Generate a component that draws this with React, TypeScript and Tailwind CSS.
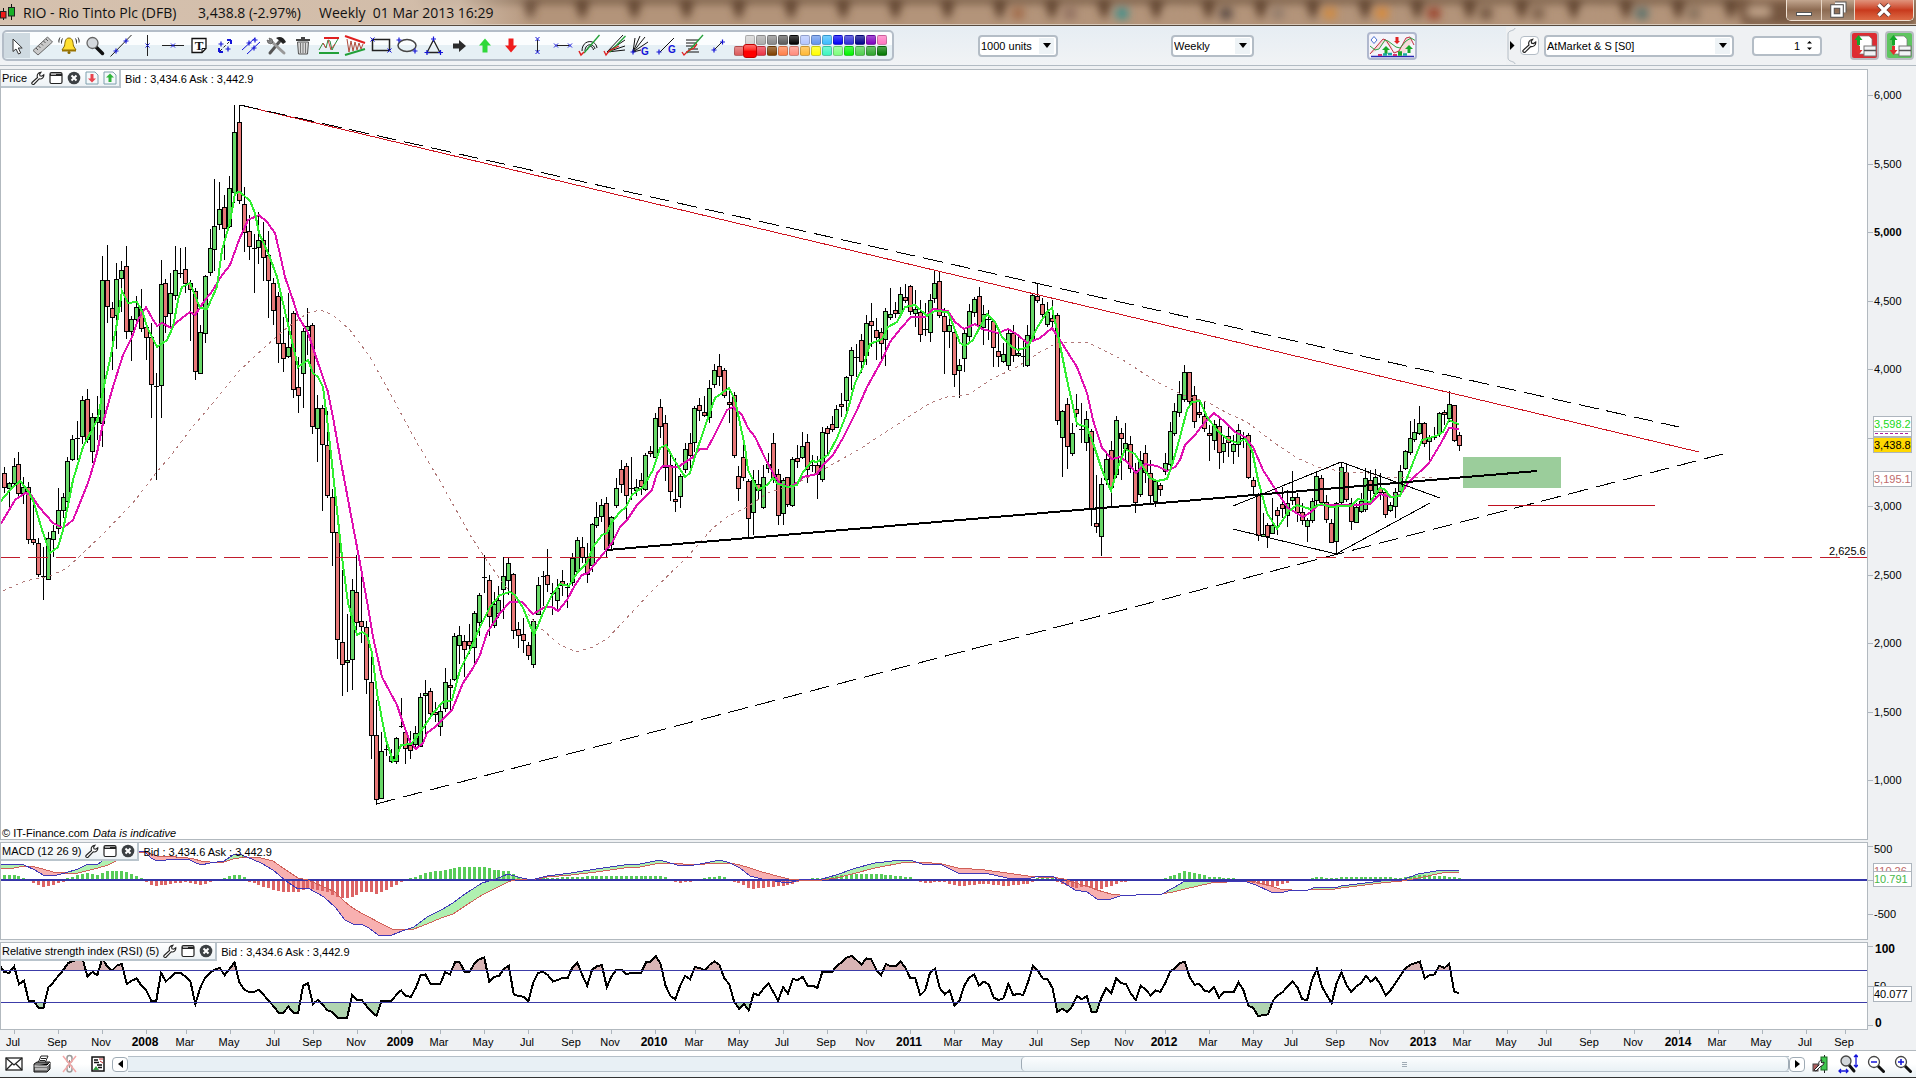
import type { ReactNode } from "react";

type Pt = [number, number];

// --- Chart data -----------------------------------------------------------

const FIRST_X = 4.3;
const WEEK = 4.898;

const weekX = (i: number) => Math.floor(FIRST_X + WEEK * i);

// One weekly candle per entry: direction, high, body top, body bottom, low
const CANDLES = `
r467,473,487,493 g482,483,488,507 g458,466,483,487 r452,464,493,498 g477,487,493,504 r482,487,539,544 r500,539,542,545 r538,543,574,577
r547,576,576,600 g532,538,579,580 g525,531,539,557 g488,510,528,534 g493,497,510,518 g457,461,501,502 g435,439,459,461 r421,438,438,460
g396,400,436,444 r389,399,439,443 g413,417,451,463 g396,417,422,440 g256,280,423,447 r245,280,306,323 r302,308,317,370 g263,279,315,349
g261,270,278,312 r246,266,331,339 g316,319,331,361 g296,307,319,326 r289,309,328,332 r322,327,337,360 r323,337,384,418 r373,386,386,480
g260,284,385,418 r279,283,316,333 g273,293,313,328 g246,270,295,300 r248,273,273,278 r247,269,283,293 r280,283,289,341 r288,291,371,380
g325,332,373,373 g275,276,333,343 g229,248,272,276 g179,226,249,271 g182,209,224,230 r195,207,228,260 g176,188,226,228 g105,132,192,203
r105,122,200,204 r187,204,232,252 r215,231,246,260 r234,248,248,293 g212,240,247,264 r222,240,257,281 r231,255,280,318 r278,283,310,325
r292,296,343,363 r317,343,358,372 g293,347,356,358 r311,313,389,398 r357,387,395,413 g328,331,373,408 g308,326,330,355 r323,325,426,434
g395,408,428,462 r405,408,444,511 r411,445,495,498 r489,497,532,566 r532,532,639,659 r570,642,664,696 g614,660,662,692 g579,590,659,690
r555,592,622,636 r577,621,626,643 r621,627,679,694 r655,682,735,759 r700,735,799,805 g732,751,798,799 r737,749,749,756 g749,756,761,763
g737,738,761,764 r698,726,726,728 r730,732,748,764 r731,745,750,759 g726,733,744,747 g693,697,746,747 g680,693,695,734 r688,691,713,715
r702,712,714,722 g706,711,726,736 g668,682,708,712 r679,685,687,712 g633,636,679,681 g626,635,645,664 r635,641,649,677 r624,641,645,654
g611,613,647,664 g593,595,622,636 r555,577,577,593 r575,580,616,636 g592,604,625,628 g586,600,613,618 g557,576,589,619 g557,563,580,595
r573,574,630,639 r622,629,635,648 r618,634,640,653 r642,645,655,660 g619,621,664,668 g577,585,614,615 r571,576,576,606 r549,575,584,592
r583,593,593,615 g579,588,600,612 r570,581,585,596 r583,587,587,608 g553,558,582,586 g537,540,571,573 r537,547,557,563 r543,557,574,583
g523,524,565,572 g502,517,525,528 g499,505,516,522 r497,503,549,557 g516,517,544,550 g478,488,505,508 r460,469,484,493 r463,466,495,520
r457,488,488,500 g479,487,490,496 r473,480,486,495 g453,455,489,491 r446,451,453,457 g413,418,457,458 r399,407,426,438 r415,423,467,481
r455,465,491,501 r458,499,501,512 g474,476,496,508 g443,449,469,473 r433,443,455,473 g406,408,442,452 r398,405,410,421 r396,412,415,417
g380,388,417,423 g364,370,384,388 r354,366,376,386 r368,370,395,398 r388,402,404,423 r392,395,455,458 r466,476,488,501 r443,457,477,481
r479,481,518,539 g470,480,512,535 r470,484,490,500 g465,477,507,509 g453,464,468,473 r433,443,477,483 r469,474,515,525 g478,480,513,525
r477,477,504,507 g457,459,505,507 r445,458,461,468 g432,446,457,459 r434,442,469,483 r455,465,465,472 r456,465,474,499 g427,432,479,482
r426,428,433,455 r416,424,429,432 g405,409,427,428 r393,404,406,417 g376,377,400,416 g347,350,375,390 r344,357,357,377 r334,340,361,373
g315,323,355,365 r303,321,325,347 r318,330,337,360 r328,332,343,362 g308,311,339,366 g288,314,317,320 r302,310,313,318 g287,294,313,315
r284,297,300,303 r285,286,311,315 g290,309,313,327 r300,312,334,342 r303,329,329,336 g294,300,332,342 g271,283,298,303 r272,281,315,318
r308,316,331,374 g312,325,331,348 r330,332,374,387 g359,365,370,398 g330,333,358,372 g304,311,336,341 g297,299,312,317 r287,296,325,328
g305,314,327,345 r310,319,319,340 r320,321,347,367 r333,351,356,367 g343,354,361,363 g330,333,365,370 r325,333,355,362 g337,353,355,357
r340,356,356,367 g325,335,365,367 g293,295,339,342 r283,296,300,303 r298,304,314,317 g302,312,324,327 r300,318,321,327 r313,315,420,425
g410,411,437,477 r398,404,446,469 g423,433,453,456 r394,409,413,427 r403,429,429,443 g411,419,442,451 r429,431,509,526 r475,523,526,533
g478,484,536,556 g453,459,479,485 r441,450,487,507 g416,420,474,478 r428,433,438,480 g423,443,448,460 r436,444,468,473 r463,470,502,513
g451,460,494,497 r445,453,472,483 r460,473,495,503 g479,481,501,507 r483,485,489,496 g453,463,471,475 g422,431,464,470 g403,411,433,436
g381,394,412,417 g365,372,399,402 r372,372,401,408 r386,395,421,428 r399,412,414,418 r402,416,428,432 r425,433,435,461 g420,424,440,450
r418,426,452,469 g437,443,451,463 r427,436,442,457 g435,444,451,464 g424,430,444,457 r432,438,438,448 r433,435,477,479 r477,480,486,495
r493,494,535,541 g513,534,536,537 r523,525,536,548 g498,525,533,534 r507,510,515,535 r487,504,508,518 g490,503,515,527 g471,497,500,505
r493,497,512,522 r503,512,520,525 g518,520,526,542 g498,501,520,523 g473,476,500,505 r475,478,502,504 r495,502,519,523 r519,523,542,543
g502,503,541,554 g463,467,502,504 r465,472,499,502 r498,503,521,530 g503,507,522,523 g493,501,511,513 g468,478,509,512 r470,480,490,503
g469,477,493,498 r473,488,492,500 r490,492,514,518 g502,505,510,512 g488,492,506,518 g465,471,491,493 g450,451,468,470 g421,438,452,455
g419,432,439,442 g406,423,433,435 r422,423,443,447 g435,437,441,464 r427,437,437,440 g412,413,433,437 r410,412,414,425 g391,404,418,422
r405,405,440,442 r432,435,445,451`
  .trim()
  .split(/\s+/)
  .map((s) => {
    const [high, top, bottom, low] = s.slice(1).split(",").map(Number);
    return { up: s[0] === "g", high, top, bottom, low };
  });

const FAST_MA =
  "0,502 10,490 20,481 29,492 34,503 42,530 50,553 58,547 63,530 73,480 83,447 93,428 98,418 103,390 110,360 117,323 122,291 128,303 137,302 143,313 147,327 157,347 167,340 173,327 178,300 182,287 190,283 200,308 207,309 217,287 222,250 230,222 235,193 240,192 250,201 255,213 259,233 269,255 277,277 287,320 298,367 308,360 313,373 318,377 323,387 328,427 333,473 342,557 348,603 357,635 362,632 367,635 372,653 377,693 386,740 393,761 396,759 401,745 411,744 420,733 433,713 443,702 452,700 460,670 470,650 480,627 490,607 500,595 510,592 515,595 523,608 534,635 543,613 552,595 560,584 569,586 577,573 587,563 593,547 602,535 607,533 612,522 620,512 626,507 632,495 643,487 653,470 660,448 666,445 673,458 685,477 690,473 698,447 708,418 715,398 729,388 735,400 745,447 748,470 758,490 767,485 773,478 778,484 788,487 797,485 803,472 812,461 817,462 828,455 837,438 847,413 855,383 863,367 870,344 882,339 888,327 897,322 905,307 915,305 927,316 935,311 948,312 955,330 960,343 965,346 973,340 982,323 987,314 995,322 1002,337 1012,347 1018,350 1028,347 1037,328 1047,312 1052,308 1057,330 1067,380 1077,424 1087,427 1093,443 1102,470 1111,491 1118,467 1125,449 1135,454 1143,467 1150,478 1157,481 1167,479 1173,462 1180,437 1187,410 1192,402 1200,401 1207,417 1217,430 1227,439 1237,443 1245,439 1252,450 1258,480 1267,513 1277,529 1288,512 1297,505 1310,509 1321,504 1331,507 1342,506 1351,506 1358,499 1370,502 1380,488 1384,489 1391,497 1400,496 1405,483 1414,460 1422,440 1436,436 1443,432 1449,420 1455,423 1459,424";

const MID_MA =
  "0,525 8,512 15,500 25,493 31,495 39,507 53,523 63,528 73,520 80,503 89,480 97,453 103,423 112,390 123,355 132,337 138,320 146,307 152,318 157,326 162,323 171,328 177,322 190,312 195,315 203,303 213,290 220,278 230,265 239,240 248,220 259,215 267,222 275,233 279,250 285,277 293,300 298,316 308,333 317,360 328,392 333,417 340,457 350,510 360,563 368,607 373,637 382,677 397,705 403,723 410,742 416,749 423,743 427,733 435,727 452,710 463,683 473,668 480,655 487,633 500,613 510,602 522,602 533,614 545,607 552,607 558,611 567,600 575,585 582,575 588,573 598,560 612,543 620,527 627,520 637,505 652,490 657,473 663,466 678,467 693,457 700,449 707,449 713,438 722,420 727,410 733,407 742,415 748,428 755,437 765,458 773,473 780,484 790,487 798,482 803,477 817,474 823,465 833,455 843,438 857,410 867,387 882,360 890,342 902,327 911,317 925,317 933,309 948,311 955,322 964,329 975,324 982,329 998,333 1008,329 1018,335 1027,343 1040,338 1052,328 1060,340 1068,353 1077,367 1087,393 1093,420 1102,448 1112,459 1120,457 1127,462 1136,473 1145,464 1157,466 1167,471 1175,467 1180,460 1185,445 1195,435 1205,422 1214,413 1225,422 1235,432 1245,437 1253,447 1263,470 1277,492 1288,508 1303,517 1311,512 1318,505 1354,505 1370,504 1380,494 1391,497 1400,495 1408,483 1429,463 1441,443 1449,428 1459,429";

const SLOW_MA =
  "3,591 25,581 50,576 67,568 83,553 100,537 133,503 156,473 173,453 190,430 213,403 240,370 277,336 293,323 308,313 320,310 333,315 350,330 370,357 390,393 417,443 440,481 470,535 488,562 502,582 537,625 560,645 577,652 593,647 608,638 623,622 650,593 687,557 713,528 727,517 747,507 768,493 793,485 828,467 863,447 907,418 930,403 947,397 970,394 990,380 1017,367 1040,352 1057,343 1087,342 1123,360 1157,382 1183,395 1207,402 1227,413 1247,422 1273,442 1297,458 1318,467 1344,472 1368,473 1382,477 1433,477";

// x, macd line, signal line
const MACD: [number, number, number][] = [
  [0, 865, 869], [14, 864, 868], [24, 865, 866], [35, 870, 867], [43, 875, 869], [53, 876, 872], [65, 873, 873],
  [78, 869, 873], [86, 865, 871], [98, 864, 868], [108, 857, 865], [122, 850, 858], [139, 851, 853], [145, 852, 852],
  [151, 858, 854], [157, 861, 856], [176, 859, 857], [188, 859, 858], [194, 862, 859], [201, 865, 861], [210, 863, 862],
  [224, 861, 862], [233, 855, 859], [239, 854, 858], [247, 857, 857], [261, 863, 858], [273, 870, 861], [286, 881, 870],
  [298, 889, 878], [308, 888, 880], [324, 897, 887], [335, 907, 892], [345, 920, 902], [353, 924, 908], [361, 924, 913],
  [369, 928, 917], [378, 935, 922], [392, 935, 929], [402, 931, 930], [414, 927, 929], [427, 917, 924], [441, 910, 918],
  [453, 903, 914], [465, 894, 906], [482, 883, 895], [496, 879, 888], [508, 874, 882], [518, 877, 879], [531, 880, 880],
  [547, 876, 877], [571, 873, 875], [596, 869, 872], [624, 865, 868], [640, 864, 867], [660, 860, 863], [677, 865, 863],
  [689, 866, 865], [705, 863, 864], [720, 860, 863], [730, 863, 863], [740, 868, 865], [750, 876, 868], [762, 879, 872],
  [781, 882, 877], [789, 883, 879], [799, 880, 880], [822, 879, 880], [836, 875, 878], [856, 868, 873], [875, 863, 868],
  [901, 860, 863], [913, 861, 862], [922, 864, 862], [942, 865, 864], [958, 873, 868], [985, 873, 870], [1007, 878, 873],
  [1028, 879, 876], [1038, 876, 877], [1052, 876, 877], [1064, 883, 879], [1075, 890, 883], [1087, 892, 886],
  [1097, 899, 890], [1111, 899, 894], [1120, 896, 895], [1136, 895, 895], [1162, 894, 894], [1173, 888, 892],
  [1185, 881, 889], [1211, 881, 883], [1244, 881, 881], [1256, 885, 882], [1271, 892, 886], [1280, 893, 889],
  [1292, 890, 890], [1308, 890, 890], [1316, 887, 889], [1335, 888, 889], [1341, 886, 888], [1365, 883, 885],
  [1381, 881, 883], [1402, 880, 881], [1418, 874, 878], [1442, 870, 873], [1459, 871, 872],
];

// Weekly RSI(5) values
const RSI = [
  68, 67, 75, 53, 57, 32, 32, 23, 23, 49, 55, 63, 70, 79, 82, 83, 84, 62, 68, 64, 85, 75, 70, 76, 78, 53, 57, 60, 51, 45,
  32, 31, 67, 56, 62, 67, 67, 62, 56, 28, 48, 61, 67, 71, 73, 64, 72, 80, 55, 46, 43, 43, 46, 39, 32, 25, 17, 17, 25, 17,
  17, 51, 54, 28, 33, 27, 20, 18, 11, 11, 11, 39, 33, 33, 25, 18, 13, 32, 32, 32, 39, 45, 38, 37, 48, 64, 65, 53, 53, 53,
  68, 65, 80, 80, 68, 68, 79, 84, 86, 56, 62, 63, 72, 76, 40, 38, 37, 31, 55, 67, 68, 64, 56, 58, 61, 60, 74, 80, 64, 51,
  71, 75, 77, 49, 63, 71, 71, 65, 67, 67, 67, 80, 81, 88, 78, 51, 38, 34, 51, 63, 59, 74, 73, 70, 77, 81, 77, 60, 53, 31,
  22, 28, 20, 41, 39, 47, 54, 43, 32, 49, 41, 59, 58, 62, 51, 51, 48, 68, 68, 68, 76, 80, 86, 88, 83, 77, 85, 84, 71, 64,
  78, 75, 75, 81, 73, 60, 60, 39, 45, 67, 72, 48, 40, 45, 26, 32, 51, 61, 65, 51, 56, 52, 36, 33, 35, 53, 39, 41, 39, 55,
  76, 70, 60, 59, 48, 18, 22, 18, 25, 38, 34, 38, 18, 18, 36, 48, 41, 60, 54, 53, 41, 33, 51, 46, 39, 45, 43, 54, 68, 73,
  79, 81, 62, 52, 53, 45, 43, 49, 36, 43, 43, 43, 55, 45, 26, 23, 13, 14, 15, 32, 39, 43, 50, 56, 49, 34, 33, 58, 72, 50,
  39, 29, 54, 68, 52, 43, 50, 54, 63, 56, 61, 52, 39, 45, 54, 63, 72, 77, 79, 81, 60, 64, 65, 76, 73, 78, 44, 41,
];

const MONTHS: [string, number][] = [
  ["Jul", 14], ["Sep", 58], ["Nov", 102], ["2008", 146], ["Mar", 186], ["May", 230], ["Jul", 274], ["Sep", 313],
  ["Nov", 357], ["2009", 401], ["Mar", 440], ["May", 484], ["Jul", 528], ["Sep", 572], ["Nov", 611], ["2010", 655],
  ["Mar", 695], ["May", 739], ["Jul", 783], ["Sep", 827], ["Nov", 866], ["2011", 910], ["Mar", 954], ["May", 993],
  ["Jul", 1037], ["Sep", 1081], ["Nov", 1125], ["2012", 1165], ["Mar", 1209], ["May", 1253], ["Jul", 1292],
  ["Sep", 1336], ["Nov", 1380], ["2013", 1424], ["Mar", 1463], ["May", 1507], ["Jul", 1546], ["Sep", 1590],
  ["Nov", 1634], ["2014", 1679], ["Mar", 1718], ["May", 1762], ["Jul", 1806], ["Sep", 1845],
];

// --- Small icon helpers ---------------------------------------------------

const BLUE = "#1414d8";

function Plus({ x, y }: { x: number; y: number }) {
  return <path d={`M${x - 2.5} ${y}h5M${x} ${y - 2.5}v5`} stroke={BLUE} strokeWidth="1.2" />;
}

function Cross({ x, y }: { x: number; y: number }) {
  return <path d={`M${x - 2} ${y - 2}l4 4M${x + 2} ${y - 2}l-4 4`} stroke={BLUE} strokeWidth="1" />;
}

function Wrench({ className }: { className: string }) {
  return (
    <svg viewBox="0 0 14 14" className={className} fill="white" stroke="#222" strokeWidth="1.1">
      <path d="M1 11.5L6.5 6.5C5.6 4 7 1.4 10 1.2L8.6 3.2 9 4.8 10.8 5.2 12.8 3.7C13.2 6.6 10.6 8.5 8.2 7.9L3 13.2C1.8 14 .2 12.6 1 11.5z" />
    </svg>
  );
}

function WindowIcon() {
  return (
    <svg viewBox="0 0 14 14" className="size-3.5">
      <rect x="1" y="1.5" width="12" height="11" rx="1.5" fill="#fff" stroke="#222" strokeWidth="1.2" />
      <path d="M1 2.5h12v2.5H1z" fill="#222" />
      <path d="M2 2.5h5v1.5H2z" fill="#aaa" />
    </svg>
  );
}

function CloseIcon() {
  return (
    <svg viewBox="0 0 14 14" className="size-3.5">
      <circle cx="7" cy="7" r="6.3" fill="#3c4043" />
      <path d="M4.5 4.5l5 5M9.5 4.5l-5 5" stroke="#fff" strokeWidth="2" />
    </svg>
  );
}

function PageArrow({ up }: { up?: boolean }) {
  return (
    <svg viewBox="0 0 14 14" className="size-3.5">
      <path d="M1 1h9l3 3v9H1z" fill="#f4f8fa" stroke="#7fa0ae" />
      {up ? (
        <path d="M7 2.5l4 4H8.5V11h-3V6.5H3z" fill="#2fb53b" />
      ) : (
        <path d="M7 11.5l4-4H8.5V3h-3v4.500H3z" fill="#e8434d" />
      )}
    </svg>
  );
}

// --- Toolbar --------------------------------------------------------------

const TOOLS: [string, ReactNode][] = [
  ["Select", <path d="M7 4v12.500l3-2.500 2.500 5 2.200-1-2.400-5h3.900z" fill="#fff" stroke="#333" />],
  ["Measure", (
    <>
      <path d="M1 15.500L15.500 2l5 5L6 20z" fill="#c9c9c9" stroke="#666" />
      <path d="M4 13l2 2M6.500 11l2 2M9 8.500l2 2M11.500 6l2 2M14 4l2 2" stroke="#555" />
    </>
  )],
  ["Alert", (
    <>
      <path d="M11 3c-4 0-4 5-4.500 8L4 15h14l-2.500-4C15 8 15 3 11 3z" fill="#ffe030" stroke="#8a6a00" />
      <path d="M4 15h14v1.500H4z" fill="#9a7400" />
      <circle cx="11" cy="17.500" r="1.500" fill="#8a6a00" />
      <path d="M4.500 3.500c-1 1.500-1 3.500-1 5M2 2.500c-1 1.500-1.300 3.500-1 5M17.500 3.500c1 1.500 1 3.500 1 5M20 2.500c1 1.500 1.300 3.500 1 5" stroke="#222" />
    </>
  )],
  ["Zoom", (
    <>
      <path d="M12 12l6.500 6.500" stroke="#111" strokeWidth="3.500" strokeLinecap="round" />
      <circle cx="8.500" cy="8" r="5.500" fill="#d4d8dc" stroke="#666" strokeWidth="1.300" />
    </>
  )],
  ["Line", (<><path d="M.5 21.500L21.500 0" stroke="#222" /><Plus x={6} y={16} /><Plus x={16} y={6} /></>)],
  ["Vertical line", (<><path d="M11.500 0v21" stroke="#222" /><Cross x={11.5} y={10.5} /></>)],
  ["Horizontal line", (<><path d="M0 10.500h22" stroke="#222" /><Cross x={11} y={10.5} /></>)],
  ["Text", (
    <>
      <path d="M4 3.500h14v10l-4 4H4z" fill="#fff" stroke="#111" strokeWidth="1.300" />
      <path d="M14 17.500v-4h4" stroke="#111" fill="none" />
      <text x="11" y="15" textAnchor="middle" fontSize="13" fontWeight="700" fill="#111" fontFamily="Liberation Serif, serif">T</text>
    </>
  )],
  ["Segment", (<><path d="M6 16L16 6" stroke="#222" strokeDasharray="3 2" /><path d="M5 17v-4M5 17h4M17 5v4M17 5h-4" stroke={BLUE} strokeWidth="2" /><Plus x={7} y={9} /><Plus x={14} y={14} /></>)],
  ["Parallel lines", (<><path d="M2 15L15 3M7 19L20 7" stroke={BLUE} /><Plus x={9} y={8} /><Plus x={14} y={13} /><Plus x={15} y={5} /></>)],
  ["Settings", (
    <>
      <path d="M4 18L14 6" stroke="#555" strokeWidth="3" strokeLinecap="round" />
      <path d="M10 3c4-2.500 8-.5 10 4l-3 2-3-3z" fill="#222" />
      <path d="M18 18L6 7" stroke="#999" strokeWidth="3" strokeLinecap="round" />
      <path d="M3 3l3 1 1 3-2 2-3-1-1-3 3 1z" fill="#888" stroke="#444" strokeWidth=".6" />
    </>
  )],
  ["Delete", (
    <>
      <path d="M5.500 7h11L15.500 19h-9z" fill="#d8d8d8" stroke="#555" />
      <path d="M4 5h14M9 3h4" stroke="#444" strokeWidth="2" />
      <path d="M8.500 8v10M11 8v10M13.500 8v10" stroke="#777" />
    </>
  )],
  ["Horizontal channel", (
    <>
      <path d="M6 3h15" stroke="#e02020" strokeWidth="2" />
      <path d="M1 18h20" stroke="#22a038" strokeWidth="2" />
      <path d="M1 15l4-7 3 5 2-8 2 1 2 9 3-6 3-5" fill="none" stroke="#2f8a3a" />
      <path d="M5 8l3 5M10 5l3 10M14 13l3-4" stroke="#d04040" fill="none" />
    </>
  )],
  ["Triangle channel", (
    <>
      <path d="M1 1l20 7" stroke="#e02020" strokeWidth="2" />
      <path d="M1 20l20-6" stroke="#22a038" strokeWidth="2" />
      <path d="M3 4l2 13 2-11 2 10 2-9 2 8 2-7 2 6 2-5" fill="none" stroke="#b04a3a" />
    </>
  )],
  ["Rectangle", (<><rect x="2.500" y="4.500" width="17" height="11" fill="none" stroke="#222" strokeWidth="1.500" /><Cross x={2.5} y={4.500} /><Cross x={19.5} y={15.5} /></>)],
  ["Ellipse", (<><ellipse cx="11" cy="10.500" rx="9" ry="6" fill="none" stroke="#444" strokeWidth="1.500" /><Plus x={3} y={5} /><Plus x={19} y={16} /></>)],
  ["Triangle", (<><path d="M11.500 5L18 17.500H5z" fill="none" stroke="#222" strokeWidth="1.300" /><Plus x={11.5} y={4} /><Plus x={5} y={17.5} /><Plus x={18.5} y={17.5} /></>)],
  ["Arrow right", <path d="M5 8.500h6V5l7 6-7 6v-3.500H5z" fill="#2c2c2c" />],
  ["Arrow up", <path d="M11 3.500l6 7h-3.500v7h-5v-7H5z" fill="#2fd83a" />],
  ["Arrow down", <path d="M11 17.500l6-7h-3.500v-7h-5v7H5z" fill="#f01c1c" />],
  ["Vertical segment", (<><path d="M11.500 5v12" stroke="#222" /><Cross x={11.5} y={4} /><Cross x={11.5} y={17} /></>)],
  ["Horizontal segment", (<><path d="M5 10.500h12" stroke="#222" /><Cross x={4} y={10.5} /><Cross x={18} y={10.5} /></>)],
  ["Fibonacci arcs", (
    <>
      <path d="M4 16c0-12 14-12 15-3M7 16c0-8 9-8 10-2M9.500 15c0-5 5-5 6 0" fill="none" stroke="#111" />
      <path d="M6 18L21.500 0" stroke="#22a038" strokeWidth="1.300" />
      <path d="M1 16l2 4 3-3" fill="none" stroke="#e02020" strokeWidth="1.500" />
    </>
  )],
  ["Fibonacci fan", (
    <>
      <path d="M3 17L19 0M3 17L21 5M3 17l18-6M3 17l18-2" stroke="#111" />
      <path d="M6 17L21.500 1" stroke="#22a038" strokeWidth="1.300" />
      <path d="M0 16l2 4 3-4 10-5" fill="none" stroke="#e02020" strokeWidth="1.300" />
    </>
  )],
  ["Gann fan", (
    <>
      <path d="M3 17L5 3M3 17L10 1M3 17L15 2M3 17L18 7M3 17l8-2" stroke="#111" />
      <Plus x={3} y={17} />
      <text x="11" y="19.500" fontSize="10" fontWeight="700" fill={BLUE} fontFamily="Liberation Sans, sans-serif">G</text>
    </>
  )],
  ["Gann line", (
    <>
      <path d="M4 17L18 3" stroke="#111" />
      <Plus x={3} y={17} />
      <text x="12" y="17.500" fontSize="10" fontWeight="700" fill={BLUE} fontFamily="Liberation Sans, sans-serif">G</text>
    </>
  )],
  ["Retracement", (
    <>
      <path d="M4 5h13M4 8h11M4 11h10M6 14h10M4 17h13" stroke="#111" />
      <path d="M5 18L21 0" stroke="#22a038" strokeWidth="1.300" />
      <path d="M0 17l2 3 4-4 6-3 3-4" fill="none" stroke="#e02020" strokeWidth="1.300" />
    </>
  )],
  ["Free segment", (<><path d="M6 15l8-8" stroke="#222" /><Plus x={6} y={15} /><Plus x={14.5} y={7} /></>)],
];

function Swatch({ className }: { className: string }) {
  return (
    <button
      type="button"
      aria-label="Colour"
      className={`h-[10px] w-[10px] rounded-[2px] border border-black/20 bg-linear-to-b from-white/30 to-transparent ${className}`}
    />
  );
}

const TOP_ROW = [
  "bg-[#d2d2d2]", "bg-[#ababab]", "bg-[#888888]", "bg-[#5c5c5c]", "bg-[#000000]", "bg-[#b4c6ff]", "bg-[#6495ed]",
  "bg-[#3cbcff]", "bg-[#0000f5]", "bg-[#2c2cd8]", "bg-[#00008c]", "bg-[#7d00c0]", "bg-[#ff74c0]",
];

const BOTTOM_ROW = [
  "bg-[#dc5c5c]", "bg-[#ff0000]", "bg-[#ea3344]", "bg-[#7f4000]", "bg-[#ff8049]", "bg-[#ff8c7c]", "bg-[#ffb833]",
  "bg-[#ffff00]", "bg-[#3cf5c0]", "bg-[#7cff7c]", "bg-[#00f500]", "bg-[#4ccf4c]", "bg-[#2ca52c]", "bg-[#007800]",
];

function Picker({ label, value, className }: { label: string; value: string; className: string }) {
  return (
    <div className={`relative h-[22px] rounded-[4px] border-2 border-[#b4bdc6] bg-white ${className}`}>
      <select aria-label={label} className="block size-full appearance-none bg-transparent pl-px text-[11px] leading-[18px] outline-none">
        <option>{value}</option>
      </select>
      <span className="pointer-events-none absolute top-[1px] right-[2px] flex h-4 w-[15px] items-center justify-center bg-[#eef3f6]">
        <svg viewBox="0 0 8 5" className="h-[5px] w-2"><path d="M0 0h8L4 5z" /></svg>
      </span>
    </div>
  );
}

function OrderButton({ label, className }: { label: string; className: string }) {
  return (
    <button type="button" aria-label={label} className={`flex size-[29px] items-center justify-center rounded-[4px] border-2 border-[#b9bcc2] ${className}`}>
      <svg viewBox="0 0 24 24" className="size-6">
        <path d="M6 2h10l3 3v15H6z" fill="#fff" stroke="#777" strokeWidth=".7" />
        <path d="M5.500 1l4 5h-2.500v5H4V6H1.500z" fill="#14a82a" />
        <path d="M5.500 21l4-5h-2.500v-4H4v4H1.500z" fill="#e03030" />
        <rect x="11" y="12" width="12" height="10" fill="#f2f4f6" stroke="#777" />
        <path d="M11 16.500h12" stroke="#555" strokeWidth="1.500" />
      </svg>
    </button>
  );
}

function TitleBar() {
  return (
    <header className="relative flex h-[26px] shrink-0 items-start border-b border-[#574a3e] bg-[#b3947a]">
      <svg className="absolute inset-0 h-[25px] w-full" aria-hidden="true">
        <defs>
          <filter id="soft"><feGaussianBlur stdDeviation="4" /></filter>
          <linearGradient id="glow" x1="0" x2="1">
            <stop offset="0" stopColor="#d9c6b4" stopOpacity=".9" />
            <stop offset=".85" stopColor="#d9c6b4" stopOpacity=".8" />
            <stop offset="1" stopColor="#d9c6b4" stopOpacity="0" />
          </linearGradient>
        </defs>
        <g filter="url(#soft)">
          <rect x="420" y="-4" width="1330" height="8" fill="#7d624b" />
          {Array.from({ length: 24 }, (_, k) => (
            <path key={k} d={`M${522 + k * 52.2} 0h16l-6 18h-4z`} fill="#5e432f" />
          ))}
          <path d="M1735 0h181v26h-173z" fill="#76563f" />
          <rect x="1748" y="7" width="22" height="9" fill="#c7a98e" />
          {["#a06a4a", "#907060", "#3c8f8c", "#b3947a", "#584a42", "#927c6c", "#d08a40", "#d98a3a", "#9a3f2a", "#6f5440", "#7b604c", "#b3947a", "#58706c", "#86705c"].map((c, k) => (
            <rect key={k} x={1012 + k * 52} y="8" width="12" height="11" fill={c} />
          ))}
        </g>
        <rect width="540" height="25" fill="url(#glow)" />
        <path d="M0 24.500h4000" stroke="#d8c9ba" />
      </svg>
      <svg viewBox="0 0 16 18" className="relative mt-1 h-[18px] w-4">
        <path d="M3.500 4v12M11.500 0v16" stroke="#111" />
        <rect x=".5" y="7.500" width="5.500" height="6.500" fill="#f01818" stroke="#222" />
        <rect x="8.500" y="3.500" width="6" height="8.500" fill="#18b028" stroke="#222" />
      </svg>
      <h1 className="relative ml-[7px] flex font-['Open_Sans',sans-serif] text-[14px] leading-[25px] whitespace-pre text-[#111]">
        <span className="w-[175px]">RIO - Rio Tinto Plc (DFB)</span>
        <span className="w-[121px]">3,438.8 (-2.97%)</span>
        <span>Weekly  01 Mar 2013 16:29</span>
      </h1>
      <div className="relative mr-[2px] ml-auto flex h-[21px] overflow-hidden rounded-b-[5px] border border-t-0 border-[#f0e2d4]">
        <button type="button" aria-label="Minimize" className="flex w-[35px] items-end justify-center border-r border-[#e6d5c5] bg-linear-to-b from-[#c2a68f] via-[#8d6b52] to-[#a88b74] pb-1">
          <span className="h-1 w-4 border border-[#555] bg-white" />
        </button>
        <button type="button" aria-label="Restore" className="flex w-[33px] items-center justify-center border-r border-[#e6d5c5] bg-linear-to-b from-[#c2a68f] via-[#8d6b52] to-[#a88b74]">
          <svg viewBox="0 0 18 18" className="size-[18px]" fill="none">
            <path d="M6 2.500h9.500v9" stroke="#555" strokeWidth="4" /><path d="M6 2.500h9.500v9" stroke="#fff" strokeWidth="2" />
            <rect x="3.500" y="5.500" width="9" height="9" stroke="#555" strokeWidth="4.500" />
            <rect x="3.500" y="5.500" width="9" height="9" stroke="#fff" strokeWidth="2.500" />
          </svg>
        </button>
        <button type="button" aria-label="Close" className="flex w-[58px] items-center justify-center bg-linear-to-b from-[#e0937c] via-[#c8391c] to-[#dd6a45]">
          <svg viewBox="0 0 16 14" className="h-3.5 w-4">
            <path d="M2.500 1.500l11 11M13.500 1.500l-11 11" stroke="#6a3a34" strokeWidth="5" />
            <path d="M2.500 1.500l11 11M13.500 1.500l-11 11" stroke="#fff" strokeWidth="3.300" />
          </svg>
        </button>
      </div>
    </header>
  );
}

function Toolbar() {
  return (
    <div className="flex h-10 shrink-0 items-center border-b border-[#b2bbc3] bg-linear-to-b from-[#e6edf3] to-[#f1f3f5]">
      <div className="ml-[2px] flex h-[31px] w-[892px] shrink-0 items-center rounded-[5px] border-2 border-[#b4bdc8] bg-linear-to-b from-[#fbfdfe] from-50% to-[#e6f0f5] to-50%">
        {TOOLS.map(([name, icon], k) => (
          <button
            key={name}
            type="button"
            aria-label={name}
            className={`flex h-[25px] w-[26px] shrink-0 items-center justify-center ${k === 0 ? "bg-[#cfdae1]" : ""}`}
          >
            <svg viewBox="0 0 22 22" className="size-[22px] overflow-visible" fill="none">{icon}</svg>
          </button>
        ))}
        <div className="relative ml-[2px] flex flex-col items-end gap-[1px]">
          <div className="flex gap-[1px]">{TOP_ROW.map((c) => <Swatch key={c} className={c} />)}</div>
          <div className="flex gap-[1px]">{BOTTOM_ROW.map((c) => <Swatch key={c} className={c} />)}</div>
          <span className="absolute top-[9px] left-[9px] size-[14px] rounded-[3px] border border-[#c00000] bg-linear-to-b from-[#ff6a6a] to-[#ff0000] to-50%" />
        </div>
      </div>
      <Picker label="Units" value="1000 units" className="ml-[84px] w-20" />
      <Picker label="Interval" value="Weekly" className="ml-[113px] w-[83px]" />
      <button type="button" aria-label="Indicators" className="ml-[113px] h-7 w-[50px] rounded-[4px] border-2 border-[#b0b8ce] bg-[#f4f4fa]">
        <svg viewBox="0 0 46 24" className="size-full" fill="none">
          <path d="M1 19L14 5l6 2 6 12 6-6 6-9 6 1-8 14h-8L16 8 4 19z" fill="#f7dada" />
          <path d="M1 20L14 5l3 1 8 13 5-2 7-13 4-1 4 8" stroke="#c03040" />
          <path d="M1 12l5 4 4-1 6-9 3 1 8 6 4 1 6-7 5-3 5 3" stroke="#30a040" />
          <path d="M5 2.500l3 3.500-3 3.500L2 6z" fill="#fff" stroke="#4a70d0" />
          <path d="M17 12l4 4h-2.500v4h-3v-4H13zM40 11l4 4h-2.500v4h-3v-4H36z" fill="#18a828" />
          <path d="M28 10l3-3h-1.500V3h-3v4H25z" fill="#e02020" />
          <path d="M2 22.500h43" stroke="#2828b0" strokeWidth="1.500" />
          <path d="M9 21h4M24 21h4" stroke="#d03070" strokeWidth="2" />
          <path d="M14 20.500h4M19 20h4M34 20.500h4" stroke="#18a8a0" strokeWidth="2.500" />
          <path d="M29 19.500h4" stroke="#18a828" strokeWidth="4.500" />
        </svg>
      </button>
      <div className="ml-auto flex h-[38px] items-center bg-[#eff1f3] pr-[2px]">
        <svg viewBox="0 0 14 38" className="h-[38px] w-3.5" fill="none">
          <path d="M9 1c0 3-7 2-7 6v24c0 4 7 3 7 6" stroke="#b4bdc6" />
          <path d="M4 14l4.500 4.500L4 23z" fill="#000" />
        </svg>
        <button type="button" aria-label="Order settings" className="flex size-[19px] items-center justify-center rounded-[4px] border border-[#b4bdc6] bg-white">
          <Wrench className="size-[15px]" />
        </button>
        <Picker label="Order type" value="AtMarket &amp; S [S0]" className="ml-[5px] w-[190px]" />
        <div className="relative ml-[18px] h-5 w-[70px] rounded-[4px] border-2 border-[#b4bdc6] bg-white">
          <input aria-label="Quantity" defaultValue="1" className="block size-full bg-transparent pr-5 text-right text-[11px] leading-4 outline-none" />
          <svg viewBox="0 0 5 9" className="pointer-events-none absolute top-[3px] right-[8px] h-[9px] w-[5px]"><path d="M2.500 0L5 2.500H0zM2.500 9L5 6.500H0z" /></svg>
        </div>
        <div className="ml-7 flex gap-1.5">
          <OrderButton label="Sell" className="bg-[#dd2c33]" />
          <OrderButton label="Buy" className="bg-[#5fc560]" />
        </div>
      </div>
    </div>
  );
}

// --- Panes ----------------------------------------------------------------

function PaneHeader({ title, children }: { title: string; children?: ReactNode }) {
  return (
    <div className="absolute top-0 left-0 flex h-[18px] items-center gap-1 text-[11px] leading-[18px] whitespace-nowrap">
      <div className="flex h-[18px] items-center gap-1 border-r-2 border-b-2 border-[#b9c4cc] bg-linear-to-b from-white to-[#edf2f5] pr-[2px] pl-px">
        <h2>{title}</h2>
        <Wrench className="size-3.5" />
        <WindowIcon />
        <CloseIcon />
        {children}
      </div>
      <span>Bid : 3,434.6 Ask : 3,442.9</span>
    </div>
  );
}

function Tag({ y, text, color, fill = "#fff" }: { y: number; text: string; color: string; fill?: string }) {
  return (
    <g>
      <rect x="1873.5" y={y + 0.5} width="38" height="15" fill={fill} stroke="#adb5bd" strokeWidth="1" />
      <text x="1874" y={y + 12} fill={color}>{text}</text>
    </g>
  );
}

function Pane({ top, className, plot, axis, header }: { top: number; className: string; plot: ReactNode; axis: ReactNode; header: ReactNode }) {
  return (
    <section className={`flex ${className}`}>
      <div className="relative min-w-0 flex-1 overflow-hidden border border-[#b2b9bf] bg-white">
        <svg className="block size-full">
          <g transform={`translate(-1 ${-top - 1})`}>{plot}</g>
        </svg>
        {header}
      </div>
      <svg className="block h-full w-12 shrink-0 text-[11px]">
        <g transform={`translate(-1868 ${-top})`}>{axis}</g>
      </svg>
    </section>
  );
}

function PricePlot() {
  return (
    <>
      <rect x="1463" y="457" width="98" height="31" fill="#9bcd9b" />
      <g shapeRendering="crispEdges">
        {CANDLES.map((c, i) => {
          const x = weekX(i);
          return (
            <g key={i}>
              <path d={`M${x + 0.5} ${c.high}V${c.low}`} stroke="#000" />
              {c.bottom > c.top ? (
                <rect x={x - 1.5} y={c.top + 0.5} width="4" height={c.bottom - c.top} fill={c.up ? "#68d868" : "#e87878"} stroke="#000" />
              ) : (
                <path d={`M${x - 2} ${c.top + 0.5}h5`} stroke="#000" />
              )}
            </g>
          );
        })}
      </g>
      <g fill="none" shapeRendering="crispEdges">
        <polyline points={SLOW_MA} stroke="#b07878" strokeDasharray="3 4" />
        <polyline points={MID_MA} stroke="#e010b0" strokeWidth="2" />
        <polyline points={FAST_MA} stroke="#30ee30" strokeWidth="2" />
        <path d="M240 105L1699 452" stroke="#cc1420" />
        <path d="M240 105L1679 427" stroke="#000" strokeDasharray="20 8" />
        <path d="M376 804L1723 454" stroke="#000" strokeDasharray="20 8" />
        <path d="M0 557.500H1867" stroke="#c01c2c" strokeDasharray="20 8" />
        <path d="M1488 505.500h167" stroke="#c01020" />
        <path d="M607 550L1537 471" stroke="#000" strokeWidth="2" />
        <path d="M1233 506L1341 462 1440 498M1233 529L1336 554 1430 503" stroke="#000" />
      </g>
      <text x="1829" y="555" fontSize="11">2,625.6</text>
      <text x="2" y="837" fontSize="11">© IT-Finance.com</text>
      <text x="93" y="837" fontSize="11" fontStyle="italic">Data is indicative</text>
    </>
  );
}

function PriceAxis() {
  return (
    <>
      {[6000, 5500, 5000, 4500, 4000, 3500, 3000, 2500, 2000, 1500, 1000].map((p) => {
        const y = Math.round(95 + ((6000 - p) * 137) / 1000);
        return (
          <g key={p}>
            <path d={`M1868 ${y + 0.5}h5`} stroke="#adb5bd" />
            {p !== 3500 && (
              <text x="1874" y={y + 4} fontWeight={p === 5000 ? 700 : 400}>{p.toLocaleString("en-US")}</text>
            )}
          </g>
        );
      })}
      <Tag y={421} text="" color="#000" />
      <path d="M1875 433.500h35" stroke="#b020a0" strokeDasharray="3 2" />
      <Tag y={416} text="3,598.2" color="#20d820" />
      <Tag y={437} text="3,438.8" color="#000" fill="#ffd800" />
      <Tag y={471} text="3,195.1" color="#c06a6a" />
    </>
  );
}

// Distance of the signal line below the macd line at x
function spreadAt(x: number) {
  const k = MACD.findIndex((m) => m[0] >= x);
  if (k <= 0) return MACD[0][2] - MACD[0][1];
  const [x0, a0, b0] = MACD[k - 1];
  const [x1, a1, b1] = MACD[k];
  const t = (x - x0) / (x1 - x0);
  return b0 - a0 + t * (b1 - a1 - (b0 - a0));
}

function MacdPlot() {
  return (
    <>
      {MACD.slice(1).map(([x, a, b], k) => {
        const [px, pa, pb] = MACD[k];
        return (
          <path key={k} d={`M${px} ${pa}L${x} ${a}V${b}L${px} ${pb}z`} fill={a + pa > b + pb ? "#f8b0b0" : "#b0f0b0"} />
        );
      })}
      <g shapeRendering="crispEdges">
        {RSI.map((_, i) => {
          const h = Math.round(spreadAt(weekX(i)));
          if (h === 0) return null;
          return (
            <rect key={i} x={weekX(i) - 1} y={h > 0 ? 879 - h : 881} width="3" height={Math.abs(h)} fill={h > 0 ? "#58cc58" : "#dc6464"} />
          );
        })}
        <path d="M0 880H1867" stroke="#3434a8" strokeWidth="2" />
        <polyline points={MACD.map(([x, , b]) => `${x},${b}`).join(" ")} fill="none" stroke="#d06058" />
        <polyline points={MACD.map(([x, a]) => `${x},${a}`).join(" ")} fill="none" stroke="#4038b8" />
      </g>
    </>
  );
}

function MacdAxis() {
  return (
    <>
      <path d="M1868 846.500h5M1868 880.500h5M1868 914.500h5" stroke="#adb5bd" />
      <text x="1874" y="853">500</text>
      <text x="1874" y="918">-500</text>
      <Tag y={863} text="110.26" color="#c06a6a" />
      <Tag y={871} text="10.791" color="#48b848" />
    </>
  );
}

function RsiPlot() {
  const points: Pt[] = RSI.map((v, i) => [FIRST_X + WEEK * i, 1026.4 - v * 0.8]);
  const line = points.map((p) => p.join(",")).join(" ");
  const last = points[points.length - 1][0];
  return (
    <>
      <clipPath id="overbought"><rect x="0" y="940" width="1867" height="30" /></clipPath>
      <clipPath id="oversold"><rect x="0" y="1003" width="1867" height="30" /></clipPath>
      <polygon points={`4,970 ${line} ${last},970`} fill="#d8b4b4" clipPath="url(#overbought)" />
      <polygon points={`4,1003 ${line} ${last},1003`} fill="#b0d4b0" clipPath="url(#oversold)" />
      <polyline points={`0,966 ${line}`} fill="none" stroke="#000" strokeWidth="2" shapeRendering="crispEdges" />
      <path d="M0 970.500H1867M0 1002.500H1867" stroke="#3c3ca8" shapeRendering="crispEdges" />
    </>
  );
}

function RsiAxis() {
  return (
    <>
      <path d="M1868 946.500h5M1868 986.500h5M1868 1025.500h5" stroke="#adb5bd" />
      <text x="1875" y="953" fontWeight="700" fontSize="12">100</text>
      <text x="1874" y="990">50</text>
      <text x="1875" y="1027" fontWeight="700" fontSize="12">0</text>
      <Tag y={986} text="40.077" color="#000" />
    </>
  );
}

function BottomBar() {
  return (
    <footer className="flex h-7 shrink-0 items-center border-t border-b border-t-[#b2b9bf] border-b-[#333] bg-linear-to-b from-white from-50% to-[#eaf1f5] pr-1 pl-[5px]">
      <button type="button" aria-label="Mail">
        <svg viewBox="0 0 18 14" className="h-3.5 w-[18px]" fill="none" stroke="#222" strokeWidth="1.300">
          <rect x="1" y="1" width="16" height="12" fill="#fff" /><path d="M1 1l8 7 8-7M1 13l6-6M17 13l-6-6" />
        </svg>
      </button>
      <button type="button" aria-label="Print" className="ml-2.5">
        <svg viewBox="0 0 18 18" className="size-[18px]">
          <path d="M5 8L8 1h7l-3 7z" fill="#fff" stroke="#222" />
          <path d="M8 3.500h5M7 5.500h5" stroke="#222" />
          <path d="M1 9l3-2h13v7l-3 3H1z" fill="#777" stroke="#111" />
          <path d="M1.500 11h12.500l3-3M2 14h12" stroke="#fff" />
        </svg>
      </button>
      <button type="button" aria-label="Unlink" className="ml-2.5">
        <svg viewBox="0 0 18 20" className="h-5 w-[18px]" fill="none">
          <rect x="6" y="1.500" width="5" height="7" rx="2.500" stroke="#999" strokeWidth="1.500" />
          <rect x="6" y="11" width="5" height="7" rx="2.500" stroke="#999" strokeWidth="1.500" />
          <path d="M8.500 6v8" stroke="#888" />
          <path d="M2 2l13 16M15 2L2 18" stroke="#f4a8a8" strokeWidth="1.500" />
        </svg>
      </button>
      <button type="button" aria-label="Report" className="ml-3">
        <svg viewBox="0 0 14 16" className="h-4 w-3.5" fill="none">
          <rect x="1" y="1" width="12" height="14" fill="#fff" stroke="#111" strokeWidth="1.500" />
          <path d="M3 4h4M3 6.500h5M6 9h5M7 11.500h4" stroke="#111" strokeWidth="1.500" />
          <path d="M8 3h4M9 5l3 2" stroke="#c03030" /><path d="M2 14l3-4 3 4z" fill="#30a040" />
        </svg>
      </button>
      <button type="button" aria-label="Scroll left" className="ml-[7px] flex h-[15px] w-4 items-center justify-center rounded-[4px] border border-[#9fabb5] bg-white">
        <svg viewBox="0 0 5 8" className="h-2 w-[5px]"><path d="M5 0v8L0 4z" /></svg>
      </button>
      <div className="flex h-4 min-w-0 flex-1 border-y border-[#b4bfc8] bg-[#e8f0f5]">
        <div className="flex-[892]" />
        <div className="flex flex-[766] items-center justify-center rounded-[4px] border-x border-[#9fabb5] bg-linear-to-b from-[#fbfdfe] to-[#e9f1f5]">
          <span className="flex h-[5px] w-[5px] items-center border-y border-[#9fabb5]">
            <span className="h-px w-full bg-[#9fabb5]" />
          </span>
        </div>
      </div>
      <button type="button" aria-label="Scroll right" className="flex h-[15px] w-4 items-center justify-center rounded-[4px] border border-[#9fabb5] bg-white">
        <svg viewBox="0 0 5 8" className="h-2 w-[5px]"><path d="M0 0v8l5-4z" /></svg>
      </button>
      <button type="button" aria-label="Chart settings" className="ml-[7px]">
        <svg viewBox="0 0 16 18" className="h-[18px] w-4">
          <rect x="1" y="9" width="5" height="7" fill="#b06060" stroke="#444" />
          <path d="M12.500 0v18" stroke="#222" /><rect x="9" y="2" width="6" height="13" fill="#40c850" stroke="#186820" />
          <path d="M2 15l5-5c-1-3 1-5 3-5l-1 2 1 1 2-1c0 3-2 4-3 4l-5 5z" fill="#fff" stroke="#222" />
        </svg>
      </button>
      <button type="button" aria-label="Fit" className="ml-2.5">
        <svg viewBox="0 0 20 20" className="size-5" fill="none">
          <path d="M11 11l5 6" stroke="#111" strokeWidth="3" strokeLinecap="round" />
          <circle cx="8" cy="7" r="5" fill="#d4d8dc" stroke="#444" strokeWidth="1.300" />
          <path d="M18 1v12M16 3l2-2 2 2M16 11l2 2 2-2M1 17h9M3 15l-2 2 2 2M8 15l2 2-2 2" stroke={BLUE} strokeWidth="1.300" />
        </svg>
      </button>
      {["Zoom out", "Zoom in"].map((name) => (
        <button key={name} type="button" aria-label={name} className="ml-[9px]">
          <svg viewBox="0 0 18 18" className="size-[18px]" fill="none">
            <path d="M11 11l5.500 5.500" stroke="#111" strokeWidth="3" strokeLinecap="round" />
            <circle cx="7" cy="7" r="5.500" fill="#fff" stroke="#444" strokeWidth="1.300" />
            <path d={name === "Zoom in" ? "M4 7h6M7 4v6" : "M4 7h6"} stroke={BLUE} strokeWidth="1.500" />
          </svg>
        </button>
      ))}
    </footer>
  );
}

export default function App() {
  return (
    <div className="flex h-screen flex-col overflow-hidden bg-[#eff1f3] font-['Liberation_Sans',Arial,sans-serif] text-black">
      <TitleBar />
      <Toolbar />
      <main className="mt-[3px] flex min-h-0 flex-1 flex-col gap-[2px]">
        <Pane
          top={69}
          className="min-h-0 flex-1"
          plot={<PricePlot />}
          axis={<PriceAxis />}
          header={<PaneHeader title="Price"><PageArrow /><PageArrow up /></PaneHeader>}
        />
        <Pane top={842} className="h-[98px] shrink-0" plot={<MacdPlot />} axis={<MacdAxis />} header={<PaneHeader title="MACD (12 26 9)" />} />
        <Pane
          top={942}
          className="h-[88px] shrink-0"
          plot={<RsiPlot />}
          axis={<RsiAxis />}
          header={<PaneHeader title="Relative strength index (RSI) (5)" />}
        />
      </main>
      <svg className="block h-5 w-full shrink-0 text-[11px]">
        {MONTHS.map(([label, x]) => (
          <g key={x}>
            <path d={`M${x + 0.5} 0v4`} stroke="#adb5bd" />
            <text x={x - 1} y="16" textAnchor="middle" className={/\d/.test(label) ? "text-[12px] font-bold" : ""}>{label}</text>
          </g>
        ))}
      </svg>
      <BottomBar />
    </div>
  );
}
